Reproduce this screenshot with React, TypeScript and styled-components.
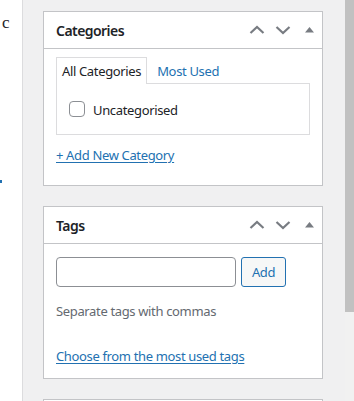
import styled, { createGlobalStyle } from "styled-components";

const GlobalStyle = createGlobalStyle`
  html, body {
    margin: 0;
    padding: 0;
    background: #f0f0f1;
  }
  body {
    font-family: "Noto Sans", "Open Sans", "Liberation Sans", sans-serif;
    font-size: 13px;
    letter-spacing: -0.35px;
    color: #1d2327;
  }
  * {
    box-sizing: border-box;
  }
`;

const Page = styled.div`
  display: flex;
  height: 401px;
  overflow: hidden;
`;

const EditorEdge = styled.div`
  width: 23px;
  flex-shrink: 0;
  background: #fff;
  border-right: 1px solid #dcdcde;
  display: flex;
  flex-direction: column;
  padding: 13px 0 0 2px;
  font-family: "Liberation Serif", serif;
  font-size: 17px;
  letter-spacing: 0;
  color: #1d2327;
  overflow: hidden;

  .mark {
    margin-top: 147px;
    margin-left: -2px;
    width: 2px;
    height: 3px;
    background: #2271b1;
  }
`;

const Sidebar = styled.div`
  flex: 1;
  display: flex;
  flex-direction: column;
  gap: 20px;
  padding: 11px 22px 0 20px;
`;

const Scrollbar = styled.div`
  width: 9px;
  flex-shrink: 0;
  display: flex;
  flex-direction: column;
  background: #f1f1f1;

  .thumb {
    height: 312px;
    background: #c1c1c1;
  }
`;

const Postbox = styled.div`
  background: #fff;
  border: 1px solid #c3c4c7;
  flex-shrink: 0;
`;

const PostboxHeader = styled.div`
  display: flex;
  align-items: center;
  height: 37px;
  border-bottom: 1px solid #c3c4c7;
  padding-left: 12px;

  h2 {
    flex: 1;
    margin: 0;
    font-size: 14px;
    font-weight: 600;
    letter-spacing: -0.55px;
    color: #1d2327;
  }
`;

const HandleButton = styled.button`
  width: 26px;
  height: 36px;
  padding: 0;
  border: 0;
  background: none;
  display: flex;
  align-items: center;
  justify-content: center;
  color: #787c82;
`;

const Inside = styled.div`
  padding: 0 12px 12px;
`;

const Tabs = styled.div`
  display: flex;
  align-items: flex-end;
  margin-top: 8px;
`;

const Tab = styled.div<{ $active?: boolean }>`
  padding: 0 5px;
  height: 27px;
  line-height: 26px;
  margin-bottom: -1px;
  position: relative;
  z-index: 1;
  background: ${(p) => (p.$active ? "#fff" : "transparent")};
  border: 1px solid ${(p) => (p.$active ? "#dcdcde" : "transparent")};
  border-bottom: 0;
  color: ${(p) => (p.$active ? "#1d2327" : "#2271b1")};
  margin-right: 4px;
`;

const TabPanel = styled.div`
  border: 1px solid #dcdcde;
  height: 52px;
  display: flex;
  align-items: center;
  padding: 0 12px;
`;

const CheckLabel = styled.label`
  display: flex;
  align-items: center;
  gap: 8px;
  line-height: 20px;
  padding-top: 2px;

  .box {
    width: 16px;
    height: 16px;
    border: 1px solid #8c8f94;
    border-radius: 4px;
    background: #fff;
    margin-top: -3px;
  }
`;

const Link = styled.a<{ $top: number }>`
  display: block;
  margin-top: ${(p) => p.$top}px;
  line-height: 20px;
  color: #2271b1;
  text-decoration: underline;
  text-underline-offset: 2px;
`;

const TagRow = styled.div`
  display: flex;
  gap: 5px;
  margin-top: 13px;
`;

const TagInput = styled.div`
  width: 180px;
  height: 30px;
  border: 1px solid #8c8f94;
  border-radius: 4px;
  background: #fff;
`;

const Button = styled.button`
  width: 45px;
  height: 30px;
  border: 1px solid #2271b1;
  border-radius: 3px;
  background: #f6f7f7;
  color: #2271b1;
  font-family: inherit;
  font-size: 13px;
  letter-spacing: inherit;
  padding: 0;
`;

const Howto = styled.p`
  margin: 14px 0 0;
  line-height: 20px;
  color: #646970;
`;

const StubBox = styled.div`
  flex: 1;
  background: #fff;
  border: 1px solid #c3c4c7;
  border-bottom: 0;
`;

function Chevron({ up }: { up?: boolean }) {
  return (
    <svg width="16" height="10" viewBox="0 0 16 10">
      <path
        d={up ? "M1.5 8L8 2l6.5 6" : "M1.5 2L8 8l6.5-6"}
        fill="none"
        stroke="currentColor"
        strokeWidth="2.2"
      />
    </svg>
  );
}

function Header({ title }: { title: string }) {
  return (
    <PostboxHeader>
      <h2>{title}</h2>
      <HandleButton>
        <Chevron up />
      </HandleButton>
      <HandleButton>
        <Chevron />
      </HandleButton>
      <HandleButton>
        <svg width="9" height="6" viewBox="0 0 9 6">
          <path d="M0 5.5L4.5 0 9 5.5z" fill="currentColor" />
        </svg>
      </HandleButton>
    </PostboxHeader>
  );
}

export default function App() {
  return (
    <>
      <GlobalStyle />
      <Page>
        <EditorEdge>
          <span>c</span>
          <div className="mark" />
        </EditorEdge>
        <Sidebar>
          <Postbox>
            <Header title="Categories" />
            <Inside>
              <Tabs>
                <Tab $active>All Categories</Tab>
                <Tab>Most Used</Tab>
              </Tabs>
              <TabPanel>
                <CheckLabel>
                  <span className="box" />
                  Uncategorised
                </CheckLabel>
              </TabPanel>
              <Link $top={10}>+ Add New Category</Link>
              <div style={{ height: 8 }} />
            </Inside>
          </Postbox>
          <Postbox>
            <Header title="Tags" />
            <Inside>
              <TagRow>
                <TagInput />
                <Button>Add</Button>
              </TagRow>
              <Howto>Separate tags with commas</Howto>
              <Link $top={25}>Choose from the most used tags</Link>
            </Inside>
          </Postbox>
          <StubBox />
        </Sidebar>
        <Scrollbar>
          <div className="thumb" />
        </Scrollbar>
      </Page>
    </>
  );
}
